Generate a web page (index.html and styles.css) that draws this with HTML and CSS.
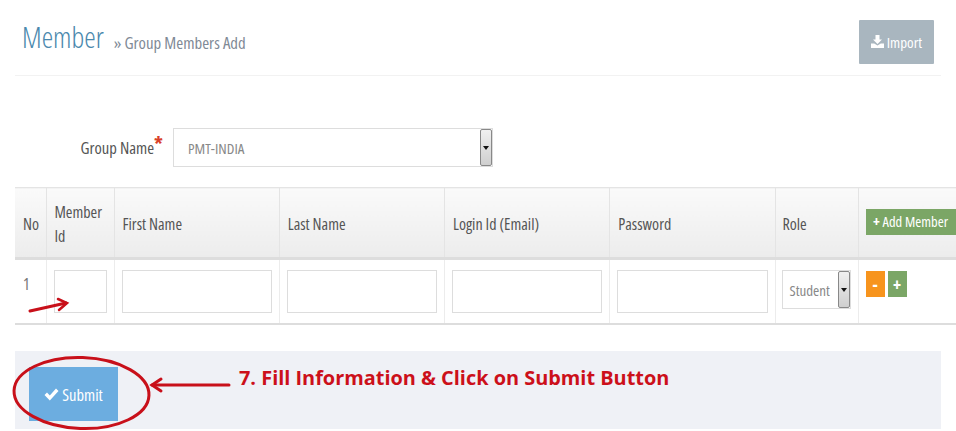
FILE: index.html
```html
<!DOCTYPE html>
<html lang="en">
<head>
  <meta charset="UTF-8">
  <meta name="viewport" content="width=device-width, initial-scale=1.0">
  <title>Group Members Add</title>
  <link rel="stylesheet" href="styles.css">
</head>
<body>
<div id="page">
  <div class="page-header">
    <h1>Member</h1>
    <span class="crumb">&raquo; Group Members Add</span>
    <button type="button" class="btn btn-import">
      <svg width="13" height="13" viewBox="0 0 13 13"><path d="M4.500 0h4v4.500h2.500L6.500 9 2 4.500h2.500z" fill="#fff"/><path d="M0 8.500h3.200L6.500 10.500l3.300-2H13V13H0z" fill="#fff"/></svg>
      Import
    </button>
  </div>

  <div class="group-row">
    <label class="group-label">Group Name<span class="req">*</span></label>
    <div class="fake-select group-select">
      <span>PMT-INDIA</span>
      <span class="select-btn"></span>
    </div>
  </div>

  <table class="member-table">
    <colgroup>
      <col class="c-no"><col class="c-id"><col class="c-text"><col class="c-text"><col class="c-text"><col class="c-text"><col class="c-role"><col class="c-act">
    </colgroup>
    <thead>
      <tr>
        <th>No</th>
        <th>Member Id</th>
        <th>First Name</th>
        <th>Last Name</th>
        <th>Login Id (Email)</th>
        <th>Password</th>
        <th class="role-head">Role</th>
        <th class="act-head"><button type="button" class="btn btn-add"><b>+</b> Add Member</button></th>
      </tr>
    </thead>
    <tbody>
      <tr>
        <td class="row-no">1</td>
        <td><input type="text"></td>
        <td><input type="text"></td>
        <td><input type="text"></td>
        <td><input type="text"></td>
        <td><input type="text"></td>
        <td class="role-cell">
          <div class="fake-select role-select">
            <span>Student</span>
            <span class="select-btn"></span>
          </div>
        </td>
        <td>
          <div class="row-btns">
            <button type="button" class="btn btn-minus">-</button>
            <button type="button" class="btn btn-plus">+</button>
          </div>
        </td>
      </tr>
    </tbody>
  </table>

  <div class="form-actions">
    <button type="button" class="btn btn-submit">
      <svg width="15" height="13" viewBox="0 0 15 13"><path d="M0.500 7l2.500-2.500 2.800 2.900L12 0.500l2.500 2.500-8.700 9.500z" fill="#fff"/></svg>
      Submit
    </button>
    <p class="note">7. Fill Information &amp; Click on Submit Button</p>
  </div>
</div>

<!-- red marks drawn on top of the screenshot -->
<svg class="marks" width="956" height="431" viewBox="0 0 956 431">
  <g fill="none" stroke="#c8101a" stroke-linecap="round">
    <path d="M30 311 L66 303" stroke-width="3"/>
    <path d="M58 299 L67 303 L59 310" stroke-width="2.500"/>
    <ellipse cx="81.500" cy="393" rx="67.500" ry="35.500" stroke-width="3" transform="rotate(2 81.500 393)"/>
    <path d="M152 385 H229" stroke-width="3"/>
    <path d="M161 379 L152 385 L161 391" stroke-width="3"/>
  </g>
</svg>
</body>
</html>
```

FILE: styles.css
```css
body {
  margin: 0;
  background: #fff;
  font-family: "Open Sans", Arial, sans-serif;
  font-stretch: condensed;
  color: #555;
}

#page {
  width: 956px;
  height: 431px;
  overflow: hidden;
  padding-left: 15px;
  box-sizing: border-box;
}

.page-header {
  display: flex;
  align-items: flex-start;
  width: 926px;
  height: 76px;
  box-sizing: border-box;
  padding: 19px 7px 0 7px;
  border-bottom: 1px solid #f2f2f2;
}

h1 {
  margin: 0;
  font-size: 29px;
  line-height: 36px;
  font-weight: 300;
  color: #4a88ad;
}

.crumb {
  margin: 12px 0 0 10px;
  font-size: 16.800px;
  line-height: 24px;
  color: #7f8a96;
}

.btn {
  border: none;
  padding: 0;
  color: #fff;
  font-family: inherit;
  font-stretch: inherit;
  cursor: pointer;
}

.btn-import {
  margin: 1px 0 0 auto;
  width: 75px;
  height: 44px;
  background: #a9b6bf;
  font-size: 15px;
  border-radius: 1px;
}

.group-row {
  display: flex;
  align-items: center;
  margin-top: 52px;
  height: 39px;
}

.group-label {
  width: 158px;
  padding-right: 10px;
  box-sizing: border-box;
  text-align: right;
  font-size: 16.600px;
  color: #555;
  white-space: nowrap;
}

.req {
  color: #d9402a;
  font-size: 20px;
  font-weight: 700;
  line-height: 10px;
  vertical-align: 3px;
}

.fake-select {
  display: flex;
  align-items: center;
  justify-content: space-between;
  box-sizing: border-box;
  border: 1px solid #ddd;
  background: #fff;
  color: #888;
}

.group-select {
  width: 320px;
  height: 39px;
  padding: 0 0 0 14px;
  font-size: 15px;
}

.select-btn {
  position: relative;
  width: 12px;
  height: 37px;
  box-sizing: border-box;
  border: 1px solid #888;
  border-radius: 2px;
  background: linear-gradient(#f0f0f0, #cfcfcf);
}

.select-btn::after {
  content: "";
  position: absolute;
  left: 2px;
  top: 16px;
  border: 3px solid transparent;
  border-top: 4px solid #111;
  border-bottom: none;
}

.member-table {
  margin-top: 20px;
  width: 941px;
  table-layout: fixed;
  border-collapse: collapse;
}

.c-no { width: 31px; }
.c-id { width: 68px; }
.c-text { width: 165.250px; }
.c-role { width: 83px; }
.c-act { width: 98px; }

th {
  height: 71px;
  padding: 2px 7px 0 8px;
  box-sizing: border-box;
  background: linear-gradient(#fafafa, #ececec);
  border: 1px solid #e4e4e4;
  border-bottom: 3px solid #ddd;
  font-size: 16px;
  line-height: 24px;
  font-weight: 400;
  text-align: left;
  color: #555;
}

th:first-child,
td:first-child {
  border-left: none;
}

th:last-child,
td:last-child {
  border-right: none;
}

th.role-head {
  padding-left: 7px;
}

th.act-head {
  padding: 0 0 2px 7px;
}

td {
  height: 65px;
  padding: 10px 7px;
  box-sizing: border-box;
  border: 1px solid #ececec;
  border-bottom: 2px solid #ddd;
  vertical-align: top;
  font-size: 16px;
  color: #666;
}

td.row-no {
  padding: 13px 8px 0;
  color: #777;
}

td.role-cell {
  padding-left: 6px;
}

td input {
  display: block;
  width: 100%;
  height: 43px;
  box-sizing: border-box;
  border: 1px solid #ddd;
  background: #fff;
}

.btn-add {
  width: 90px;
  height: 26px;
  background: #7ba666;
  font-size: 14.500px;
  white-space: nowrap;
}

.role-select {
  width: 69px;
  height: 39px;
  padding-left: 7px;
  font-size: 15px;
}

.role-select .select-btn {
  height: 37px;
}

.row-btns {
  display: flex;
  gap: 3px;
  margin-top: 1px;
}

.btn-minus,
.btn-plus {
  width: 19px;
  height: 26px;
  font-size: 17px;
  font-weight: 700;
}

.btn-minus { background: #f7941d; }
.btn-plus { background: #7ba666; }

.form-actions {
  display: flex;
  align-items: flex-start;
  margin-top: 26px;
  width: 926px;
  height: 78px;
  padding: 16px 0 0 14px;
  box-sizing: border-box;
  background: #eff1f6;
}

.btn-submit {
  width: 89px;
  height: 54px;
  background: #6cade0;
  font-size: 16.500px;
}

.note {
  margin: -3px 0 0 121px;
  font-size: 19.900px;
  font-stretch: normal;
  line-height: 28px;
  font-weight: 700;
  color: #cc101a;
  white-space: nowrap;
}

.marks {
  position: absolute;
  left: 0;
  top: 0;
  pointer-events: none;
}
```
